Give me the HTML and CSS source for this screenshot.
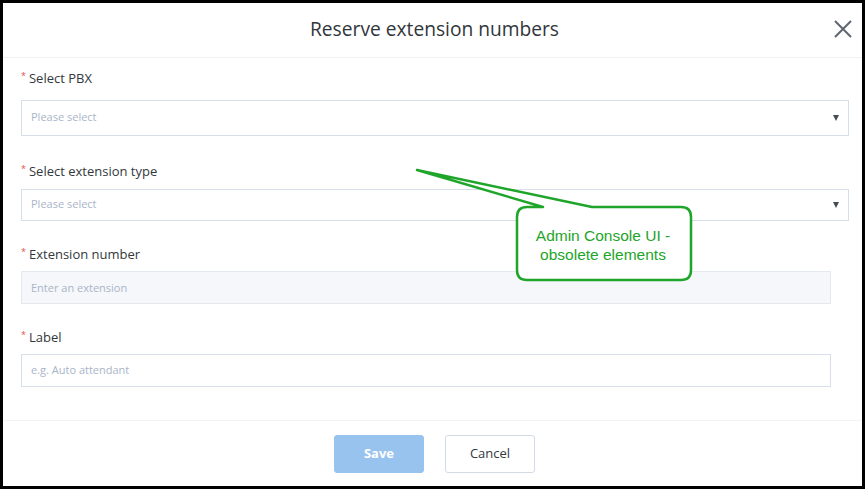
FILE: index.html
```html
<!DOCTYPE html>
<html lang="en">
<head>
<meta charset="utf-8">
<title>Reserve extension numbers</title>
<link rel="stylesheet" href="styles.css">
</head>
<body>
<div class="dialog">
  <header class="dialog-header">
    <h1 class="dialog-title">Reserve extension numbers</h1>
    <button class="close-btn" aria-label="Close">
      <svg width="18" height="18" viewBox="0 0 18 18"><path d="M1 1 L17 17 M17 1 L1 17" stroke="#5d6670" stroke-width="2" fill="none"/></svg>
    </button>
  </header>
  <main class="dialog-body">
    <div class="field field-pbx">
      <label class="field-label"><span class="req">*</span>Select PBX</label>
      <div class="select select-tall"><span class="placeholder">Please select</span><span class="caret"></span></div>
    </div>
    <div class="field field-type">
      <label class="field-label"><span class="req">*</span>Select extension type</label>
      <div class="select"><span class="placeholder">Please select</span><span class="caret"></span></div>
    </div>
    <div class="field field-ext">
      <label class="field-label"><span class="req">*</span>Extension number</label>
      <div class="input input-disabled"><span class="placeholder">Enter an extension</span></div>
    </div>
    <div class="field field-label-row">
      <label class="field-label"><span class="req">*</span>Label</label>
      <div class="input"><span class="placeholder">e.g. Auto attendant</span></div>
    </div>
  </main>
  <footer class="dialog-footer">
    <button class="btn btn-primary">Save</button>
    <button class="btn btn-default">Cancel</button>
  </footer>
</div>
<svg class="callout" width="865" height="489" viewBox="0 0 865 489">
  <path d="M417 170 L543 207 L527 207 Q517 207 517 217 L517 270 Q517 280 527 280 L681 280 Q691 280 691 270 L691 217 Q691 207 681 207 L592 207 Z" fill="#fff" stroke="#1ea52a" stroke-width="2.5" stroke-linejoin="round"/>
  <text x="603" y="241" text-anchor="middle" class="callout-text">Admin Console UI -</text>
  <text x="603" y="259.5" text-anchor="middle" class="callout-text">obsolete elements</text>
</svg>
</body>
</html>
```
FILE: styles.css
```css
* { box-sizing: border-box; }
html, body { margin: 0; padding: 0; }
body {
  background: #000;
  width: 865px;
  height: 489px;
  overflow: hidden;
  position: relative;
  font-family: "Open Sans", "Noto Sans", sans-serif;
}
.dialog {
  margin: 3px;
  width: 859px;
  height: 483px;
  background: #fff;
  display: flex;
  flex-direction: column;
}
.dialog-header {
  height: 55px;
  border-bottom: 1px solid #f0f1f3;
  display: flex;
  align-items: center;
  justify-content: center;
  position: relative;
  flex: none;
}
.dialog-title {
  margin: -3px 0 0 4px;
  font-size: 19.2px;
  font-weight: 400;
  color: #30363c;
}
.close-btn {
  position: absolute;
  right: 9px;
  top: 16px;
  width: 20px;
  height: 20px;
  padding: 0;
  border: none;
  background: transparent;
  display: flex;
  align-items: center;
  justify-content: center;
}
.dialog-body {
  flex: 1;
  padding: 11px 18px 0 18px;
}
.field { display: flex; flex-direction: column; }
.field-label {
  font-size: 13px;
  line-height: 18px;
  color: #33383d;
  display: flex;
  align-items: flex-start;
}
.req {
  color: #e5534b;
  font-size: 9px;
  line-height: 14px;
  margin-right: 3px;
  margin-left: 0;
}
.select, .input {
  border: 1px solid #d6deea;
  height: 32px;
  display: flex;
  align-items: center;
  padding: 0 9px;
  position: relative;
}
.select { width: 828px; margin-top: 9px; padding-bottom: 3px; }
.select-tall { height: 36px; margin-top: 13px; }
.input { width: 810px; height: 33px; margin-top: 8px; }
.input-disabled { background: #f5f7fa; border-color: #e4e8ef; }
.field-label-row .input { padding-bottom: 2px; }
.placeholder {
  font-size: 11px;
  color: #a9b5c8;
}
.caret {
  position: absolute;
  right: 9px;
  top: 50%;
  margin-top: -3px;
  width: 0; height: 0;
  border-left: 3.5px solid transparent;
  border-right: 3.5px solid transparent;
  border-top: 6px solid #474c52;
}
.field-type { margin-top: 26px; }
.field-ext { margin-top: 24px; }
.field-label-row { margin-top: 24px; }
.dialog-footer {
  flex: none;
  height: 66px;
  border-top: 1px solid #f2f3f5;
  display: flex;
  justify-content: center;
  align-items: flex-start;
  gap: 21px;
  padding-top: 14px;
  padding-left: 4px;
}
.btn {
  width: 90px;
  height: 38px;
  border-radius: 3px;
  font-family: "Open Sans", "Noto Sans", sans-serif;
  font-size: 13px;
  padding: 0 0 2px 0;
}
.btn-primary {
  background: #99c3ef;
  border: 1px solid #99c3ef;
  color: #fff;
  font-weight: 700;
}
.btn-default {
  background: #fff;
  border: 1px solid #d3dbe6;
  color: #33383d;
}
.callout {
  position: absolute;
  left: 0; top: 0;
  pointer-events: none;
}
.callout-text {
  font-family: "Liberation Sans", Arial, sans-serif;
  font-size: 15.5px;
  fill: #1ea52a;
}
```
